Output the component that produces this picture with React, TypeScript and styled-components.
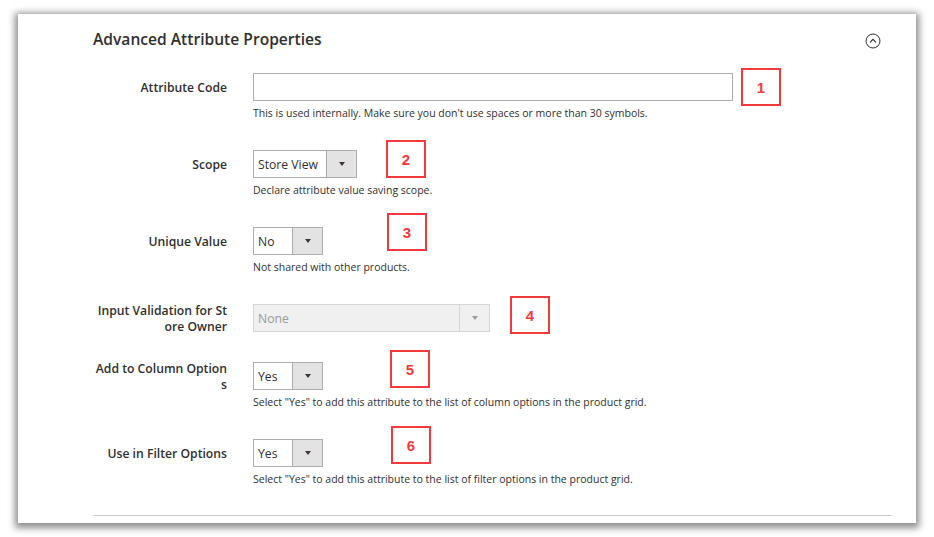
import React from "react";
import styled, { createGlobalStyle } from "styled-components";

const GlobalStyle = createGlobalStyle`
  html, body {
    margin: 0;
    padding: 0;
    background: #ffffff;
  }
  body {
    font-family: "Open Sans", "Liberation Sans", sans-serif;
    color: #303030;
  }
`;

const Page = styled.div`
  width: 934px;
  height: 537px;
  padding: 14px 0 0 18px;
  box-sizing: border-box;
  overflow: hidden;
`;

const Panel = styled.section`
  width: 898px;
  height: 509px;
  background: #fff;
  box-shadow: 0 2px 7px 3px rgba(0, 0, 0, 0.45);
  padding: 15px 24px 0 75px;
  box-sizing: border-box;
`;

const TitleRow = styled.div`
  display: flex;
  align-items: center;
  justify-content: space-between;
  height: 20px;
  margin-bottom: 24px;
`;

const Title = styled.h2`
  margin: 0;
  font-size: 15.6px;
  font-weight: 600;
  line-height: 20px;
  color: #303030;
`;

const Collapse = styled.button`
  border: none;
  background: none;
  padding: 0;
  margin: 4px 11px 0 0;
  width: 16px;
  height: 16px;
  display: flex;
  align-items: center;
  justify-content: center;
`;

const Form = styled.div`
  display: flex;
  flex-direction: column;
  gap: 30px;
`;

const Row = styled.div`
  display: grid;
  grid-template-columns: 134px 1fr;
  column-gap: 26px;
`;

const Label = styled.label`
  height: 28px;
  padding-top: 2px;
  box-sizing: border-box;
  display: flex;
  align-items: center;
  justify-content: flex-end;
  text-align: right;
  font-size: 12.2px;
  font-weight: 600;
  line-height: 16px;
  word-break: break-all;
  color: #303030;
`;

const Control = styled.div`
  position: relative;
`;

const TextInput = styled.input`
  display: block;
  width: 480px;
  height: 28px;
  box-sizing: border-box;
  border: 1px solid #adadad;
  background: #fff;
  outline: none;
`;

const Select = styled.div<{ $width: number; $disabled?: boolean }>`
  display: flex;
  width: ${(p) => p.$width}px;
  height: 28px;
  box-sizing: border-box;
  border: 1px solid ${(p) => (p.$disabled ? "#d6d6d6" : "#adadad")};
  background: ${(p) => (p.$disabled ? "#f0f0f0" : "#fff")};
`;

const SelectValue = styled.span<{ $disabled?: boolean }>`
  flex: 1;
  padding: 1px 0 0 4px;
  font-size: 12.2px;
  line-height: 26px;
  color: ${(p) => (p.$disabled ? "#9a9a9a" : "#303030")};
`;

const SelectArrow = styled.span<{ $disabled?: boolean }>`
  width: 29px;
  border-left: 1px solid ${(p) => (p.$disabled ? "#d6d6d6" : "#adadad")};
  background: ${(p) => (p.$disabled ? "#f0f0f0" : "#e3e3e3")};
  display: flex;
  align-items: center;
  justify-content: center;
  &::after {
    content: "";
    border-left: 3.5px solid transparent;
    border-right: 3.5px solid transparent;
    border-top: 4px solid ${(p) => (p.$disabled ? "#9a9a9a" : "#41362f")};
  }
`;

const Note = styled.div`
  margin-top: 5px;
  font-size: 10.5px;
  line-height: 14px;
  color: #303030;
`;

const Marker = styled.div<{ $left: number; $top: number }>`
  position: absolute;
  left: ${(p) => p.$left}px;
  top: ${(p) => p.$top}px;
  width: 40px;
  height: 38px;
  box-sizing: border-box;
  border: 2px solid #f4393c;
  background: #fff;
  display: flex;
  align-items: center;
  justify-content: center;
  font-family: "Liberation Sans", Arial, sans-serif;
  font-weight: 700;
  font-size: 15px;
  color: #f4393c;
`;

const Divider = styled.hr`
  margin: 29px 0 0 0;
  border: none;
  border-top: 1px solid #cccccc;
`;

type Field = {
  label: string;
  kind: "input" | "select";
  value?: string;
  width?: number;
  disabled?: boolean;
  note?: string;
  marker: { n: number; left: number; top: number };
};

const fields: Field[] = [
  {
    label: "Attribute Code",
    kind: "input",
    note: "This is used internally. Make sure you don't use spaces or more than 30 symbols.",
    marker: { n: 1, left: 488, top: -5 },
  },
  {
    label: "Scope",
    kind: "select",
    value: "Store View",
    width: 104,
    note: "Declare attribute value saving scope.",
    marker: { n: 2, left: 133, top: -10 },
  },
  {
    label: "Unique Value",
    kind: "select",
    value: "No",
    width: 70,
    note: "Not shared with other products.",
    marker: { n: 3, left: 134, top: -14 },
  },
  {
    label: "Input Validation for Store Owner",
    kind: "select",
    value: "None",
    width: 237,
    disabled: true,
    marker: { n: 4, left: 257, top: -8 },
  },
  {
    label: "Add to Column Options",
    kind: "select",
    value: "Yes",
    width: 70,
    note: 'Select "Yes" to add this attribute to the list of column options in the product grid.',
    marker: { n: 5, left: 137, top: -12 },
  },
  {
    label: "Use in Filter Options",
    kind: "select",
    value: "Yes",
    width: 70,
    note: 'Select "Yes" to add this attribute to the list of filter options in the product grid.',
    marker: { n: 6, left: 138, top: -13 },
  },
];

const CollapseIcon = () => (
  <svg width="16" height="16" viewBox="0 0 16 16">
    <circle cx="8" cy="8" r="7" fill="none" stroke="#303030" strokeWidth="1" />
    <path d="M5 9.3 L8 6.3 L11 9.3" fill="none" stroke="#303030" strokeWidth="1.2" />
  </svg>
);

export default function App() {
  return (
    <Page>
      <GlobalStyle />
      <Panel>
        <TitleRow>
          <Title>Advanced Attribute Properties</Title>
          <Collapse aria-label="collapse">
            <CollapseIcon />
          </Collapse>
        </TitleRow>
        <Form>
          {fields.map((f) => (
            <Row key={f.label}>
              <Label>{f.label}</Label>
              <Control>
                {f.kind === "input" ? (
                  <TextInput type="text" />
                ) : (
                  <Select $width={f.width || 70} $disabled={f.disabled}>
                    <SelectValue $disabled={f.disabled}>{f.value}</SelectValue>
                    <SelectArrow $disabled={f.disabled} />
                  </Select>
                )}
                {f.note && <Note>{f.note}</Note>}
                <Marker $left={f.marker.left} $top={f.marker.top}>
                  {f.marker.n}
                </Marker>
              </Control>
            </Row>
          ))}
        </Form>
        <Divider />
      </Panel>
    </Page>
  );
}
